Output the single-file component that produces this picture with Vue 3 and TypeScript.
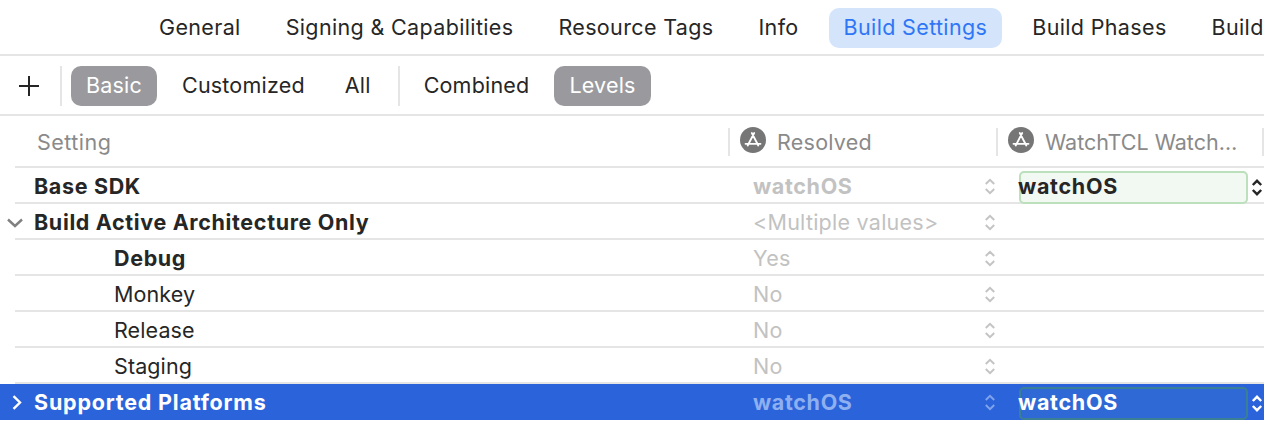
<script setup lang="ts">
interface Row {
  name: string
  indent?: boolean
  bold?: boolean
  chevron?: 'down' | 'right'
  resolved: string
  strong?: boolean
  value?: string
  selected?: boolean
}
const tabs = ['General', 'Signing & Capabilities', 'Resource Tags', 'Info', 'Build Settings', 'Build Phases', 'Build']
const rows: Row[] = [
  { name: 'Base SDK', bold: true, resolved: 'watchOS', strong: true, value: 'watchOS' },
  { name: 'Build Active Architecture Only', bold: true, chevron: 'down', resolved: '<Multiple values>' },
  { name: 'Debug', indent: true, bold: true, resolved: 'Yes' },
  { name: 'Monkey', indent: true, resolved: 'No' },
  { name: 'Release', indent: true, resolved: 'No' },
  { name: 'Staging', indent: true, resolved: 'No' },
  { name: 'Supported Platforms', bold: true, chevron: 'right', resolved: 'watchOS', strong: true, value: 'watchOS', selected: true },
]
</script>

<template>
  <div class="page">
    <nav class="tabs">
      <span v-for="t in tabs" :key="t" class="tab" :class="{ active: t === 'Build Settings' }">{{ t }}</span>
    </nav>
    <div class="filters">
      <svg class="plus" width="22" height="22" viewBox="0 0 22 22"><path d="M11 1v20M1 11h20" stroke="#262626" stroke-width="2" fill="none" /></svg>
      <i class="sep first"></i>
      <span class="pill on">Basic</span>
      <span class="pill">Customized</span>
      <span class="pill">All</span>
      <i class="sep second"></i>
      <span class="pill">Combined</span>
      <span class="pill on">Levels</span>
    </div>
    <div class="grid head">
      <div class="hcell setting">Setting</div>
      <div class="hcell divided resolved-head">
        <svg class="app" width="26" height="26" viewBox="0 0 26 26"><circle cx="13" cy="13" r="13" fill="#767676" /><path d="M11.800 6 18.300 18.500M14.200 6 7.700 18.500M5.500 16.800h15" stroke="#fff" stroke-width="1.800" stroke-linecap="round" fill="none" /></svg>
        <span>Resolved</span>
      </div>
      <div class="hcell divided">
        <svg class="app" width="26" height="26" viewBox="0 0 26 26"><circle cx="13" cy="13" r="13" fill="#767676" /><path d="M11.800 6 18.300 18.500M14.200 6 7.700 18.500M5.500 16.800h15" stroke="#fff" stroke-width="1.800" stroke-linecap="round" fill="none" /></svg>
        <span>WatchTCL Watch…</span>
        <i class="end"></i>
      </div>
    </div>
    <div v-for="r in rows" :key="r.name" class="grid row" :class="{ selected: r.selected }">
      <div class="name" :class="{ indent: r.indent, bold: r.bold }">
        <svg v-if="r.chevron === 'down'" class="disclosure" width="16" height="10" viewBox="0 0 16 10"><path d="M1 1.500 8 8l7-6.500" stroke="#808080" stroke-width="2.400" fill="none" /></svg>
        <svg v-if="r.chevron === 'right'" class="disclosure right" width="10" height="15" viewBox="0 0 10 15"><path d="M1.500 1.200 8 7.500l-6.500 6.300" stroke="#fff" stroke-width="2.400" fill="none" /></svg>
        <span>{{ r.name }}</span>
      </div>
      <div class="resolved" :class="{ strong: r.strong }">
        <span>{{ r.resolved }}</span>
        <svg class="stepper" width="12" height="17" viewBox="0 0 12 17"><path d="M1.800 6 6 1.800 10.200 6M1.800 11 6 15.200 10.200 11" stroke="currentColor" stroke-width="2" fill="none" /></svg>
      </div>
      <div class="value">
        <template v-if="r.value">
          <span class="field">{{ r.value }}</span>
          <svg class="stepper dark" width="12" height="17" viewBox="0 0 12 17"><path d="M1.800 6 6 1.800 10.200 6M1.800 11 6 15.200 10.200 11" stroke="currentColor" stroke-width="2.400" fill="none" /></svg>
        </template>
      </div>
    </div>
  </div>
</template>

<style scoped>
.page {
  width: 1264px;
  height: 448px;
  overflow: hidden;
  background: #fff;
  font-family: Inter, "Liberation Sans", sans-serif;
  font-size: 21.5px;
  color: #262626;
}
.tabs {
  display: flex;
  align-items: center;
  box-sizing: border-box;
  height: 56px;
  padding: 2px 0 0 144px;
  border-bottom: 2px solid #e5e5e5;
  white-space: nowrap;
  overflow: hidden;
  letter-spacing: 0.35px;
}
.tab {
  flex: none;
  height: 40px;
  line-height: 39px;
  padding: 0 15px;
  margin-right: 15px;
  border-radius: 10px;
}
.tab:last-child {
  padding-right: 0;
  margin-right: 0;
}
.tab.active {
  background: #d3e4fb;
  color: #2f76f6;
}
.filters {
  display: flex;
  align-items: center;
  box-sizing: border-box;
  height: 60px;
  padding: 2px 0 0 18px;
  border-bottom: 2px solid #e5e5e5;
  letter-spacing: 0.2px;
}
.plus { flex: none; }
.sep {
  flex: none;
  width: 2px;
  height: 40px;
  background: #e5e5e5;
}
.sep.first { margin: 0 9px 0 20px; }
.sep.second { margin: 0 9px 0 2px; }
.pill {
  flex: none;
  height: 40px;
  line-height: 39px;
  padding: 0 15px;
  margin-right: 10px;
  border-radius: 10px;
}
.pill.on {
  background: #9a9a9e;
  color: #fff;
}
.grid {
  display: grid;
  grid-template-columns: 728px 268px 268px;
}
.head {
  height: 52px;
  background: linear-gradient(#e5e5e5, #e5e5e5) no-repeat 15px 100% / calc(100% - 15px) 2px;
  color: #8a8a8a;
}
.hcell {
  display: flex;
  align-items: center;
  box-sizing: border-box;
  height: 50px;
  padding-top: 2px;
  position: relative;
}
.setting {
  padding-left: 37px;
  letter-spacing: 0.5px;
}
.divided {
  padding-left: 12px;
  gap: 11px;
}
.resolved-head { letter-spacing: 0.25px; }
.divided::before {
  content: "";
  position: absolute;
  left: 0;
  top: 12px;
  width: 2px;
  height: 28px;
  background: #e5e5e5;
}
.end {
  position: absolute;
  right: 0;
  top: 12px;
  width: 2px;
  height: 28px;
  background: #e5e5e5;
}
.app { flex: none; margin-top: -5px; }
.row {
  height: 36px;
  align-items: center;
  background: linear-gradient(#e5e5e5, #e5e5e5) no-repeat 15px 100% / calc(100% - 15px) 2px;
  letter-spacing: 0.1px;
}
.name {
  display: flex;
  align-items: center;
  padding-left: 34px;
  height: 34px;
  position: relative;
  white-space: nowrap;
}
.name.indent { padding-left: 114px; }
.bold {
  font-weight: 700;
  letter-spacing: 0.65px;
}
.disclosure { position: absolute; left: 7px; top: 13px; }
.disclosure.right { left: 12px; top: 10px; }
.resolved {
  display: flex;
  align-items: center;
  justify-content: space-between;
  box-sizing: border-box;
  width: 268px;
  height: 34px;
  padding-left: 25px;
  color: #c2c2c2;
  letter-spacing: 0.25px;
}
.resolved.strong {
  font-weight: 700;
  letter-spacing: 0.65px;
}
.stepper {
  flex: none;
  color: #c4c4c6;
}
.value {
  display: flex;
  align-items: flex-start;
  height: 34px;
  padding-left: 23px;
  gap: 3px;
}
.field {
  flex: none;
  box-sizing: border-box;
  width: 229px;
  height: 33px;
  line-height: 26px;
  margin-top: 2px;
  border: 2px solid #bcdfbc;
  border-radius: 5px;
  background: #f2f8f2;
  font-weight: 700;
  letter-spacing: 0.7px;
  text-indent: -3px;
}
.stepper.dark {
  color: #262626;
  margin-top: 10px;
}
.selected {
  background: #2b63da;
  color: #fff;
}
.selected .bold { letter-spacing: 0.8px; }
.selected .resolved { color: #8fb0f0; }
.selected .stepper { color: #7fa3ec; }
.selected .field {
  background: #2f69d6;
  border-color: #3a7f96;
}
.selected .stepper.dark { color: #fff; }
</style>
